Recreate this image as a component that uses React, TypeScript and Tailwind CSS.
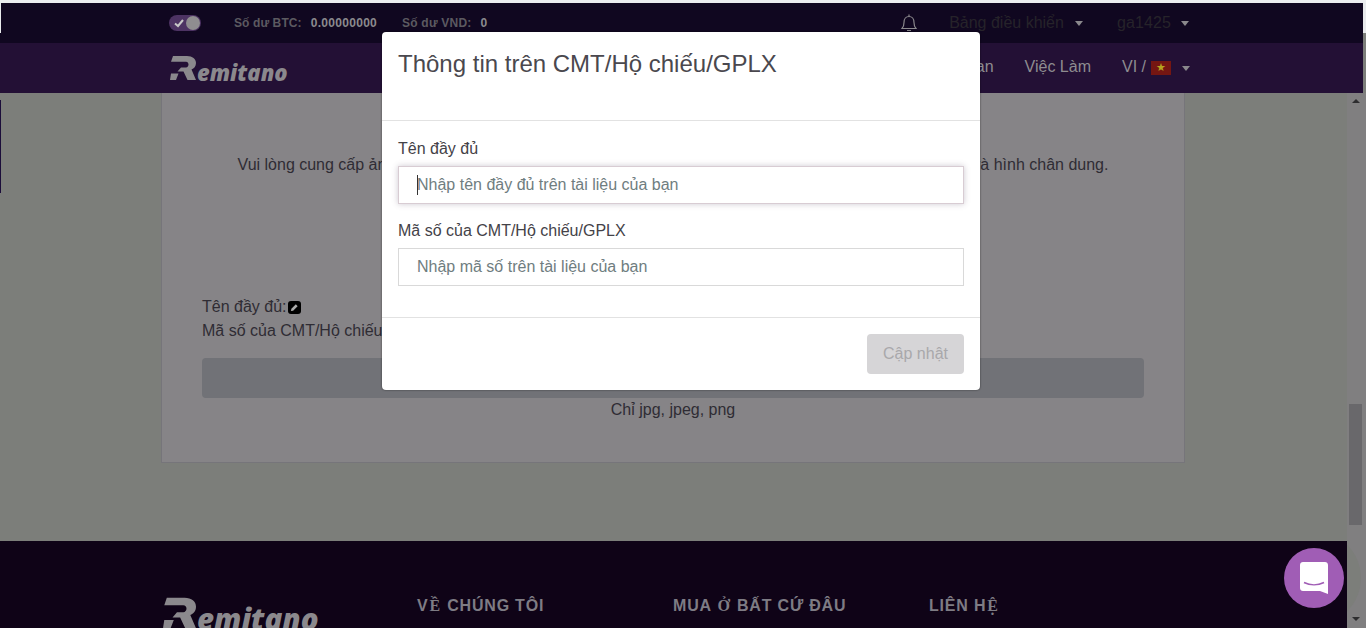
import React from 'react';

const Caret = ({ gap }: { gap?: string }) => (
  <span className={`${gap ?? 'ml-[10px]'} inline-block h-0 w-0 border-x-[4.5px] border-t-[5px] border-x-transparent border-t-[#8a888c]`} />
);

const Logo = ({ big }: { big?: boolean }) => (
  <div className="flex items-end">
    <svg viewBox="0 0 26 24" className={big ? 'h-[32px] w-[33px]' : 'h-[24px] w-[26px]'} fill="#8b898d">
      <path d="M3 0H17C22.500 0 26 3 26 7C26 10.500 24 12.500 21.500 13.500L26 24H17.500L13.500 15.500H7.500L11 11.500H16C17.500 11.500 18.500 10 18.500 8.500C18.500 7 17.500 5.800 16 5.800H1Z" />
      <path d="M1 17.500H8.500L6 24H0Z" />
    </svg>
    <span
      className={
        big
          ? "mb-[-6px] ml-px font-['Open_Sans',sans-serif] text-[29.5px] leading-[32px] font-extrabold italic text-[#8b898d]"
          : "mb-[-3px] ml-px font-['Open_Sans',sans-serif] text-[22px] leading-[22px] font-extrabold italic text-[#8b898d]"
      }
    >
      emitano
    </span>
  </div>
);

const Field = ({ label, placeholder, focused }: { label: string; placeholder: string; focused?: boolean }) => (
  <div className="flex flex-col">
    <label className="mb-[5px] text-base leading-6 text-[#444248]">{label}</label>
    <div className="relative">
      <input
        readOnly
        placeholder={placeholder}
        className={`h-[38px] w-full border px-[18px] text-base outline-none placeholder:text-[#6f7d80] ${
          focused ? 'border-[#d8ccd3] shadow-[0_0_6px_rgba(90,70,100,0.3)]' : 'border-[#d9d9d9]'
        }`}
      />
      {focused && <span className="absolute top-[9px] left-[19px] h-[20px] w-px bg-[#333]" />}
    </div>
  </div>
);

// these capitals fell back to a serif face in the original
const Serif = ({ children }: { children: string }) => (
  <span className="mx-px font-['Liberation_Serif',serif]">{children}</span>
);

const footerTitles = [
  <>V<Serif>Ề</Serif> CHÚNG TÔI</>,
  <>MUA <Serif>Ở</Serif> BẤT CỨ ĐÂU</>,
  <>LIÊN H<Serif>Ệ</Serif></>,
];

export default function App() {
  return (
    <div className="relative flex h-[628px] w-full flex-col overflow-hidden bg-[#7c7e7a] font-['Liberation_Sans',Arial,sans-serif]">
      <div className="h-[3px] shrink-0 bg-[#eceef0]" />

      {/* top bar */}
      <div className="flex h-[40px] w-[1363px] shrink-0 items-center bg-[#100720] pl-[169px] text-xs font-bold">
        <div className="relative h-4 w-8 rounded-full bg-[#4d3363]">
          <svg viewBox="0 0 12 12" className="absolute top-[2px] left-[4px] h-3 w-3" fill="none" stroke="#c8c8c8" strokeWidth="2">
            <path d="M2 6.500L5 9L10 3" />
          </svg>
          <span className="absolute top-[1px] right-[1px] h-[14px] w-[14px] rounded-full bg-[#8f8d90]" />
        </div>
        <span className="ml-[33px] tracking-[0.1px] text-[#5c5a60]">Số dư BTC:</span>
        <span className="ml-[9px] tracking-[0.3px] text-[#8b8a8e]">0.00000000</span>
        <span className="ml-[25px] tracking-[0.2px] text-[#5c5a60]">Số dư VND:</span>
        <span className="ml-[9px] text-[#8b8a8e]">0</span>
        <svg viewBox="0 0 16 18" className="ml-[414px] h-[18px] w-4" fill="none" stroke="#8a888c" strokeWidth="1.200">
          <path d="M1 14.500C2.500 13 3 11.500 3 8.500C3 5 5 2.500 8 2.500C11 2.500 13 5 13 8.500C13 11.500 13.500 13 15 14.500Z" />
          <path d="M8 0.500V2.500M6 16.500H10" />
        </svg>
        <span className="ml-[32px] text-base font-normal text-[#26232a]">Bảng điều khiển</span>
        <Caret gap="ml-[11px]" />
        <span className="ml-[34px] text-base font-normal tracking-[0.1px] text-[#26232a]">ga1425</span>
        <Caret />
      </div>

      {/* nav */}
      <div className="flex h-[50px] w-[1363px] shrink-0 items-center justify-end bg-[#231035] pr-[173px] pb-[3px] text-base text-[#8e8c90]">
        <div className="mr-auto ml-[170px] pt-[3px]">
          <Logo />
        </div>
        <span>Tổng Quan</span>
        <span className="ml-[31px]">Việc Làm</span>
        <span className="ml-[31px]">VI /</span>
        <span className="mt-[2px] ml-[5px] flex h-[14px] w-[20px] items-center justify-center bg-[#751612] text-[11px] leading-none text-[#b5a320]">
          ★
        </span>
        <span className="mt-[3px] ml-px flex">
          <Caret />
        </span>
      </div>

      <div className="flex min-h-0 flex-1">
        <div className="flex w-[1347px] flex-col">
          <div className="flex-1">
            {/* page behind the dialog */}
            <div className="ml-[161px] flex h-[370px] w-[1024px] flex-col border border-t-0 border-[#76757a] bg-[#868487] px-10 text-base leading-6 text-[#2f2c34]">
              <p className="mt-[60px] text-center">
                Vui lòng cung cấp ảnh chụp CMT/Hộ chiếu/GPLX rõ nét, bao gồm đầy đủ thông tin, mặt trước, mặt sau và hình chân dung.
              </p>
              <div className="mt-[118px] flex items-center">
                Tên đầy đủ:
                <span className="ml-px flex h-[13px] w-[13px] items-center justify-center rounded-[3px] bg-black">
                  <svg viewBox="0 0 10 10" className="h-[9px] w-[9px]" fill="#aaa">
                    <path d="M1 9L1.500 6.500L6.500 1.500L8.500 3.500L3.500 8.500Z" />
                  </svg>
                </span>
              </div>
              <div>Mã số của CMT/Hộ chiếu/GPLX:</div>
              <div className="mt-[15px] h-10 rounded-[4px] bg-[#717277]" />
              <p className="text-center">Chỉ jpg, jpeg, png</p>
            </div>
          </div>

          {/* footer */}
          <div className="h-[87px] shrink-0 overflow-hidden bg-[#0f0317] pt-[54px] pl-[163px]">
            <div className="flex items-start">
              <div className="w-[254px] pt-[2px]">
                <Logo big />
              </div>
              {footerTitles.map((title, i) => (
                <div key={i} className="w-[256px] pt-px text-base leading-5 font-bold tracking-[0.8px] text-[#7e7c84]">
                  {title}
                </div>
              ))}
            </div>
          </div>
        </div>

        {/* scrollbar */}
        <div className="relative flex flex-1 flex-col items-start overflow-hidden bg-[#807f80] pl-[2px]">
          <span className="mt-[6px] ml-[3px] h-0 w-0 border-x-[4px] border-b-[4px] border-x-transparent border-b-[#2d2d2f]" />
          <div className="mt-[301px] h-[121px] w-[13px] bg-[#69686b]" />
          <div className="absolute top-[438px] left-[-80px] h-[94px] w-[94px] rounded-full bg-[#7c7e7a]" />
          <span className="relative mt-auto mb-[7px] ml-[3px] h-0 w-0 border-x-[4px] border-t-[4px] border-x-transparent border-t-[#2d2d2f]" />
        </div>
      </div>

      <div className="absolute top-[3px] left-0 h-[30px] w-px bg-[#e8eaec]" />
      <div className="absolute top-[3px] right-0 h-[30px] w-[3px] bg-[#e8eaec]" />
      <div className="absolute top-[100px] left-0 h-[93px] w-px bg-[#1b0d3a]" />

      {/* chat bubble */}
      <div className="absolute top-[548px] left-[1284px] flex h-[60px] w-[60px] items-center justify-center rounded-full bg-[#a05db5]">
        <svg viewBox="0 0 28 32" className="h-8 w-7">
          <path d="M3 0H25C26.700 0 28 1.300 28 3V32L20 29H3C1.300 29 0 27.700 0 26V3C0 1.300 1.300 0 3 0Z" fill="#fff" />
          <path d="M4 20.500C10 23.500 18 23.500 24 20.500" fill="none" stroke="#a05db5" strokeWidth="1.600" />
        </svg>
      </div>

      {/* dialog */}
      <div className="absolute top-[32px] left-[382px] flex h-[358px] w-[598px] flex-col rounded-[4px] bg-white shadow-[0_0_2px_rgba(0,0,0,0.6)]">
        <div className="h-[89px] shrink-0 border-b border-[#e2e2e2] px-4 pt-[15px]">
          <h2 className="text-2xl leading-[34px] text-[#4a484e]">Thông tin trên CMT/Hộ chiếu/GPLX</h2>
        </div>
        <div className="flex h-[197px] shrink-0 flex-col gap-[15px] border-b border-[#e2e2e2] px-4 pt-4">
          <Field label="Tên đầy đủ" placeholder="Nhập tên đầy đủ trên tài liệu của bạn" focused />
          <Field label="Mã số của CMT/Hộ chiếu/GPLX" placeholder="Nhập mã số trên tài liệu của bạn" />
        </div>
        <div className="flex justify-end px-4 pt-4">
          <button className="h-10 w-[97px] rounded-[4px] bg-[#d6d5d7] text-base text-[#a9a8ab]">Cập nhật</button>
        </div>
      </div>
    </div>
  );
}
